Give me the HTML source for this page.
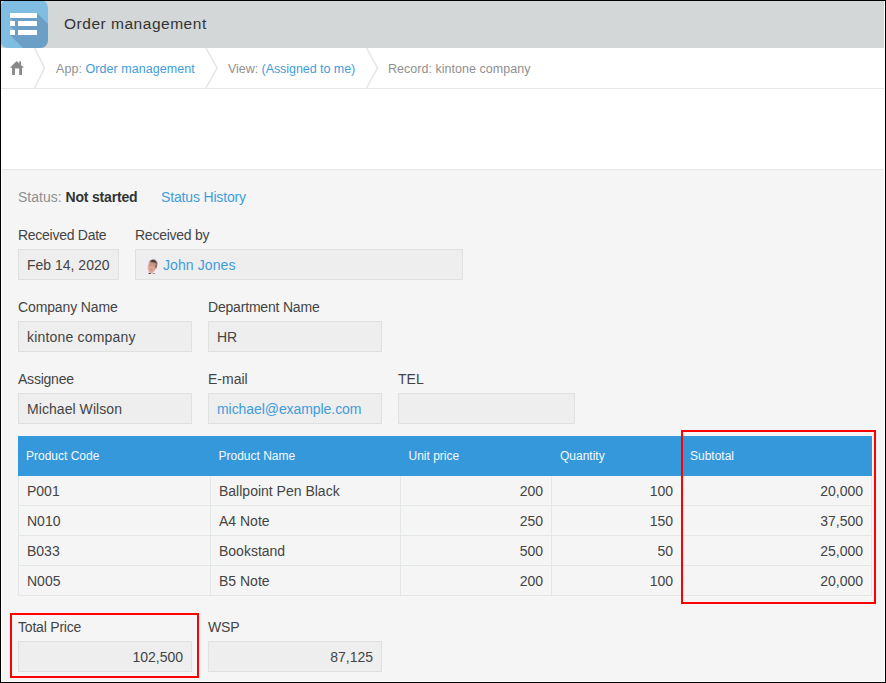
<!DOCTYPE html>
<html lang="en">
<head>
<meta charset="utf-8">
<title>Order management</title>
<style>
*{box-sizing:border-box;margin:0;padding:0}
html,body{width:886px;height:683px;overflow:hidden;background:#fff}
body{position:relative;font-family:"Liberation Sans",sans-serif;font-size:14px;color:#444;}
.abs{position:absolute}
.t{position:absolute;white-space:nowrap;line-height:20px;height:20px}
a{color:#3f9ddc;text-decoration:none}
#frame{position:absolute;left:0;top:0;width:886px;height:683px;border:1px solid #000;z-index:50;pointer-events:none}
#hdr{left:1px;top:1px;width:883px;height:47px;background:#d4d7d7}
#crumb{left:1px;top:48px;width:883px;height:41px;background:#fff;border-bottom:1px solid #e3e7e8}
#main{left:2px;top:169px;width:882px;height:512px;background:#f5f5f5;border-top:1px solid #e3e7e8}
.lbl{color:#444}
.box{position:absolute;height:31px;background:#eee;border:1px solid #dfe0e0}
.gray{color:#909090}
.th{position:absolute;top:436px;height:40px;background:#3498db;color:#f4f9fd;font-size:12px;line-height:40px;padding-left:8px;white-space:nowrap}
.td{position:absolute;height:30px;border-left:1px solid #e3e7e8;border-bottom:1px solid #e3e7e8;line-height:31px;padding:0 8px;white-space:nowrap;font-size:14px}
.r{text-align:right}
.red{position:absolute;border:2px solid #ff0000;z-index:20}
</style>
</head>
<body>
<div id="hdr" class="abs"></div>
<div id="icon" class="abs" style="left:0;top:0;width:48px;height:48px">
<svg width="48" height="48" viewBox="0 0 48 48">
<defs><clipPath id="ic"><rect x="0" y="0" width="48" height="48" rx="8" ry="8"/></clipPath></defs>
<g clip-path="url(#ic)">
<rect width="48" height="48" fill="#80bde3"/>
<path fill="#6b9fc5" d="M10 18 L37 13 L77 53 L50 58 Z M10 26 L15 21 L55 61 L50 66 Z M18 26 L37 21 L77 61 L58 66 Z M10 35 L15 30 L55 70 L50 75 Z M18 35 L37 30 L77 70 L58 75 Z"/>
<g fill="#fff"><rect x="10" y="13" width="27" height="5"/><rect x="10" y="21" width="5" height="5"/><rect x="18" y="21" width="19" height="5"/><rect x="10" y="30" width="5" height="5"/><rect x="18" y="30" width="19" height="5"/></g>
</g>
</svg>
</div>
<div class="t" id="title" style="left:64px;top:14px;font-size:15.5px;letter-spacing:0.52px;color:#333">Order management</div>

<div id="crumb" class="abs"></div>
<svg class="abs" style="left:0;top:48px" width="886" height="41" viewBox="0 0 886 41">
<g fill="none" stroke="#e0e5e7" stroke-width="1.5">
<polyline points="34.5,0 44.5,20 34.5,40"/>
<polyline points="206,0 217,20 206,40"/>
<polyline points="366.5,0 377.5,20 366.5,40"/>
</g>
<path d="M9.9 19.7 L16.6 13 L19.2 15.6 L19.2 13.2 L21 13.2 L21 17 L24.1 19.7 L22 19.7 L22 27 L19.2 27 L19.2 20.4 L14.9 20.4 L14.9 27 L12.1 27 L12.1 19.7 Z" fill="#888"/>
</svg>
<div class="t gray" id="c1" style="left:56px;top:59px;font-size:12.5px;letter-spacing:0.06px">App: <a>Order management</a></div>
<div class="t gray" id="c2" style="left:228px;top:59px;font-size:12.5px;letter-spacing:-0.05px">View: <a>(Assigned to me)</a></div>
<div class="t gray" id="c3" style="left:388px;top:59px;font-size:12.5px;letter-spacing:0.03px">Record: kintone company</div>

<div id="main" class="abs"></div>

<div class="t" id="st" style="left:18px;top:187px"><span class="gray">Status: </span><b style="letter-spacing:-0.18px;color:#333">Not started</b></div>
<div class="t" id="sh" style="left:161px;top:187px;letter-spacing:-0.16px"><a>Status History</a></div>

<div class="t lbl" id="l1" style="left:18px;top:225px;letter-spacing:-0.27px">Received Date</div>
<div class="t lbl" id="l2" style="left:135px;top:225px;letter-spacing:-0.25px">Received by</div>
<div class="box" style="left:18px;top:249px;width:101px"></div>
<div class="box" style="left:135px;top:249px;width:328px"></div>
<div class="t" id="v1" style="left:27px;top:255px">Feb 14, 2020</div>
<svg class="abs" style="left:144px;top:258px" width="16" height="16" viewBox="0 0 16 16">
<defs><clipPath id="hd"><path d="M8.6 1.6 C11.6 1.6 13 4.2 12.7 7.6 C12.4 11 10.6 15.6 8.2 15.6 C5.8 15.6 4.2 11.5 4.1 8 C4 4.2 5.6 1.6 8.6 1.6Z"/></clipPath><filter id="bl" x="-20%" y="-20%" width="140%" height="140%"><feGaussianBlur stdDeviation="0.4"/></filter></defs>
<rect width="16" height="16" fill="#f0eef3"/>
<g transform="rotate(13 8 8)" filter="url(#bl)">
<g clip-path="url(#hd)">
<rect x="0" y="0" width="16" height="16" fill="#dca594"/>
<rect x="3" y="0" width="11" height="4.4" fill="#3e3737"/>
<rect x="11.4" y="3" width="3" height="6.5" fill="#5d4f4d"/>
<rect x="4" y="4.3" width="7.4" height="1.2" fill="#a98375"/>
<rect x="5" y="6.7" width="6" height="1" fill="#b38a7c"/>
<rect x="6.2" y="11.2" width="3.4" height="0.9" fill="#c28d82"/>
</g>
</g>
<rect x="4.6" y="15" width="2.2" height="1" fill="#5a3f3c"/>
<rect x="8.6" y="15.2" width="2.4" height="0.8" fill="#8c7f86"/>
</svg>
<div class="t" id="v2" style="left:163px;top:255px;letter-spacing:0.1px"><a>John Jones</a></div>

<div class="t lbl" id="l3" style="left:18px;top:297px;letter-spacing:-0.12px">Company Name</div>
<div class="t lbl" id="l4" style="left:208px;top:297px;letter-spacing:-0.19px">Department Name</div>
<div class="box" style="left:18px;top:321px;width:174px"></div>
<div class="box" style="left:208px;top:321px;width:174px"></div>
<div class="t" id="v3" style="left:27px;top:327px;letter-spacing:0.19px">kintone company</div>
<div class="t" id="v4" style="left:217px;top:327px">HR</div>

<div class="t lbl" id="l5" style="left:18px;top:369px;letter-spacing:-0.23px">Assignee</div>
<div class="t lbl" id="l6" style="left:208px;top:369px">E-mail</div>
<div class="t lbl" id="l7" style="left:398px;top:369px">TEL</div>
<div class="box" style="left:18px;top:393px;width:174px"></div>
<div class="box" style="left:208px;top:393px;width:174px"></div>
<div class="box" style="left:398px;top:393px;width:177px"></div>
<div class="t" id="v5" style="left:27px;top:399px;letter-spacing:0.06px">Michael Wilson</div>
<div class="t" id="v6" style="left:217px;top:399px;letter-spacing:-0.07px"><a>michael@example.com</a></div>

<!-- table -->
<div class="th" style="left:18px;width:192px">Product Code</div>
<div class="th" style="left:210px;width:190px;padding-left:8.5px">Product Name</div>
<div class="th" style="left:400px;width:151px;padding-left:8.5px">Unit price</div>
<div class="th" style="left:551px;width:130px;padding-left:9px">Quantity</div>
<div class="th" style="left:681px;width:191px;padding-left:9px">Subtotal</div>

<div class="td" style="left:18px;top:476px;width:192px">P001</div>
<div class="td" style="left:210px;top:476px;width:190px">Ballpoint Pen Black</div>
<div class="td r" style="left:400px;top:476px;width:151px">200</div>
<div class="td r" style="left:551px;top:476px;width:130px">100</div>
<div class="td r" style="left:681px;top:476px;width:191px;border-right:1px solid #e3e7e8">20,000</div>
<div class="td" style="left:18px;top:506px;width:192px">N010</div>
<div class="td" style="left:210px;top:506px;width:190px">A4 Note</div>
<div class="td r" style="left:400px;top:506px;width:151px">250</div>
<div class="td r" style="left:551px;top:506px;width:130px">150</div>
<div class="td r" style="left:681px;top:506px;width:191px;border-right:1px solid #e3e7e8">37,500</div>
<div class="td" style="left:18px;top:536px;width:192px">B033</div>
<div class="td" style="left:210px;top:536px;width:190px">Bookstand</div>
<div class="td r" style="left:400px;top:536px;width:151px">500</div>
<div class="td r" style="left:551px;top:536px;width:130px">50</div>
<div class="td r" style="left:681px;top:536px;width:191px;border-right:1px solid #e3e7e8">25,000</div>
<div class="td" style="left:18px;top:566px;width:192px">N005</div>
<div class="td" style="left:210px;top:566px;width:190px">B5 Note</div>
<div class="td r" style="left:400px;top:566px;width:151px">200</div>
<div class="td r" style="left:551px;top:566px;width:130px">100</div>
<div class="td r" style="left:681px;top:566px;width:191px;border-right:1px solid #e3e7e8">20,000</div>

<div class="t lbl" id="l8" style="left:18px;top:617px;letter-spacing:-0.2px">Total Price</div>
<div class="t lbl" id="l9" style="left:208px;top:617px;letter-spacing:-0.1px">WSP</div>
<div class="box" style="left:18px;top:641px;width:174px"></div>
<div class="box" style="left:208px;top:641px;width:174px"></div>
<div class="t r" id="v7" style="left:27px;top:647px;width:156px">102,500</div>
<div class="t r" id="v8" style="left:217px;top:647px;width:156px">87,125</div>

<div class="red" style="left:681px;top:430px;width:195px;height:174px"></div>
<div class="red" style="left:10px;top:613px;width:189px;height:65px"></div>

<div id="frame"></div>
</body>
</html>
